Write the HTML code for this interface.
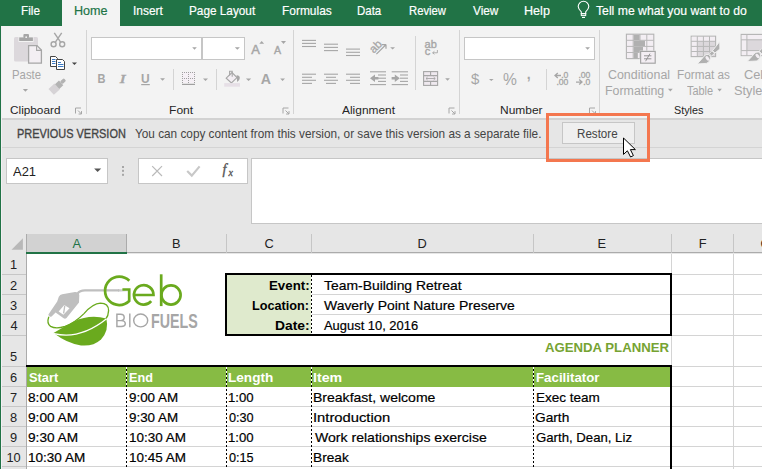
<!DOCTYPE html>
<html><head><meta charset="utf-8"><style>
html,body{margin:0;padding:0;}
body{width:762px;height:469px;overflow:hidden;position:relative;background:#fff;font-family:"Liberation Sans",sans-serif;}
body>div,body>span,body>svg{position:absolute;}
span{white-space:nowrap;line-height:1;}
</style></head><body>
<div style="left:0px;top:0px;width:762px;height:26px;background:#217346;"></div><div style="left:62px;top:0px;width:58px;height:26px;background:#f3f3f3;"></div><div style="left:0px;top:26px;width:762px;height:92px;background:#f3f3f3;"></div><div style="left:0px;top:118px;width:762px;height:2px;background:#d2d2d2;"></div><div style="left:0px;top:120px;width:762px;height:27px;background:#e6e6e6;"></div><div style="left:0px;top:147px;width:762px;height:1px;background:#d4d4d4;"></div><div style="left:0px;top:148px;width:762px;height:86px;background:#e6e6e6;"></div><div style="left:86px;top:30px;width:1px;height:84px;background:#d4d4d4;"></div><div style="left:293px;top:30px;width:1px;height:84px;background:#d4d4d4;"></div><div style="left:459px;top:30px;width:1px;height:84px;background:#d4d4d4;"></div><div style="left:599px;top:30px;width:1px;height:84px;background:#d4d4d4;"></div><div style="left:173px;top:69px;width:1px;height:21px;background:#d4d4d4;"></div><div style="left:216px;top:69px;width:1px;height:21px;background:#d4d4d4;"></div><div style="left:415px;top:36px;width:1px;height:54px;background:#d4d4d4;"></div><div style="left:546px;top:69px;width:1px;height:21px;background:#d4d4d4;"></div><div style="left:91px;top:37px;width:111px;height:23px;background:#ffffff;box-sizing:border-box;border:1px solid #c6c6c6;"></div><div style="left:202px;top:37px;width:43px;height:23px;background:#ffffff;box-sizing:border-box;border:1px solid #c6c6c6;"></div><div style="left:464px;top:37px;width:131px;height:23px;background:#ffffff;box-sizing:border-box;border:1px solid #c6c6c6;"></div><div style="left:562px;top:122px;width:73px;height:22px;background:#efefef;box-sizing:border-box;border:1px solid #c6c6c6;"></div><div style="left:6px;top:158px;width:102px;height:26px;background:#ffffff;box-sizing:border-box;border:1px solid #c6c6c6;"></div><div style="left:138px;top:158px;width:110px;height:26px;background:#ffffff;box-sizing:border-box;border:1px solid #c6c6c6;"></div><div style="left:251px;top:158px;width:520px;height:66px;background:#ffffff;box-sizing:border-box;border:1px solid #c6c6c6;"></div><div style="left:0px;top:234px;width:762px;height:20px;background:#e6e6e6;"></div><div style="left:26px;top:234px;width:101px;height:18px;background:#d2d2d2;"></div><div style="left:26px;top:234px;width:1px;height:19px;background:#ababab;"></div><div style="left:126px;top:234px;width:1px;height:19px;background:#ababab;"></div><div style="left:26px;top:252px;width:101px;height:2px;background:#217346;"></div><div style="left:127px;top:252px;width:635px;height:1px;background:#ababab;"></div><div style="left:226px;top:234px;width:1px;height:19px;background:#c6c6c6;"></div><div style="left:311px;top:234px;width:1px;height:19px;background:#c6c6c6;"></div><div style="left:533px;top:234px;width:1px;height:19px;background:#c6c6c6;"></div><div style="left:671px;top:234px;width:1px;height:19px;background:#c6c6c6;"></div><div style="left:733px;top:234px;width:1px;height:19px;background:#c6c6c6;"></div><div style="left:0px;top:254px;width:26px;height:215px;background:#e6e6e6;"></div><div style="left:26px;top:254px;width:1px;height:215px;background:#ababab;"></div><div style="left:0px;top:274px;width:26px;height:1px;background:#c6c6c6;"></div><div style="left:27px;top:274px;width:735px;height:1px;background:#d4d4d4;"></div><div style="left:0px;top:294px;width:26px;height:1px;background:#c6c6c6;"></div><div style="left:27px;top:294px;width:735px;height:1px;background:#d4d4d4;"></div><div style="left:0px;top:314px;width:26px;height:1px;background:#c6c6c6;"></div><div style="left:27px;top:314px;width:735px;height:1px;background:#d4d4d4;"></div><div style="left:0px;top:335px;width:26px;height:1px;background:#c6c6c6;"></div><div style="left:27px;top:335px;width:735px;height:1px;background:#d4d4d4;"></div><div style="left:0px;top:366px;width:26px;height:1px;background:#c6c6c6;"></div><div style="left:27px;top:366px;width:735px;height:1px;background:#d4d4d4;"></div><div style="left:0px;top:386px;width:26px;height:1px;background:#c6c6c6;"></div><div style="left:27px;top:386px;width:735px;height:1px;background:#d4d4d4;"></div><div style="left:0px;top:406px;width:26px;height:1px;background:#c6c6c6;"></div><div style="left:27px;top:406px;width:735px;height:1px;background:#d4d4d4;"></div><div style="left:0px;top:426px;width:26px;height:1px;background:#c6c6c6;"></div><div style="left:27px;top:426px;width:735px;height:1px;background:#d4d4d4;"></div><div style="left:0px;top:446px;width:26px;height:1px;background:#c6c6c6;"></div><div style="left:27px;top:446px;width:735px;height:1px;background:#d4d4d4;"></div><div style="left:0px;top:466px;width:26px;height:1px;background:#c6c6c6;"></div><div style="left:27px;top:466px;width:735px;height:1px;background:#d4d4d4;"></div><div style="left:126px;top:254px;width:1px;height:215px;background:#d4d4d4;"></div><div style="left:226px;top:254px;width:1px;height:215px;background:#d4d4d4;"></div><div style="left:311px;top:254px;width:1px;height:215px;background:#d4d4d4;"></div><div style="left:533px;top:254px;width:1px;height:215px;background:#d4d4d4;"></div><div style="left:671px;top:254px;width:1px;height:215px;background:#d4d4d4;"></div><div style="left:733px;top:254px;width:1px;height:215px;background:#d4d4d4;"></div><div style="left:27px;top:254px;width:706px;height:112px;background:#ffffff;"></div><div style="left:671px;top:254px;width:1px;height:112px;background:#d4d4d4;"></div><div style="left:733px;top:254px;width:1px;height:112px;background:#d4d4d4;"></div><div style="left:671px;top:274px;width:91px;height:1px;background:#d4d4d4;"></div><div style="left:671px;top:294px;width:91px;height:1px;background:#d4d4d4;"></div><div style="left:671px;top:314px;width:91px;height:1px;background:#d4d4d4;"></div><div style="left:671px;top:335px;width:91px;height:1px;background:#d4d4d4;"></div><div style="left:226px;top:275px;width:86px;height:59px;background:#dfeacd;"></div><div style="left:311px;top:294px;width:359px;height:1px;background:#d4d4d4;"></div><div style="left:311px;top:314px;width:359px;height:1px;background:#d4d4d4;"></div><div style="left:225px;top:273px;width:447px;height:63px;background:transparent;box-sizing:border-box;border:2px solid #000;"></div><div style="left:311px;top:275px;width:1px;height:59px;background:repeating-linear-gradient(to bottom,#000 0 2px,#fff 2px 4px);"></div><div style="left:27px;top:367px;width:643px;height:20px;background:#87bb44;"></div><div style="left:27px;top:387px;width:643px;height:82px;background:#ffffff;"></div><div style="left:27px;top:406px;width:643px;height:1px;background:#d4d4d4;"></div><div style="left:27px;top:426px;width:643px;height:1px;background:#d4d4d4;"></div><div style="left:27px;top:446px;width:643px;height:1px;background:#d4d4d4;"></div><div style="left:27px;top:466px;width:643px;height:1px;background:#d4d4d4;"></div><div style="left:26px;top:365px;width:646px;height:2px;background:#000;"></div><div style="left:670px;top:365px;width:2px;height:104px;background:#000;"></div><div style="left:126px;top:367px;width:1px;height:102px;background:repeating-linear-gradient(to bottom,#fff 0 2px,#000 2px 4px);"></div><div style="left:226px;top:367px;width:1px;height:102px;background:repeating-linear-gradient(to bottom,#fff 0 2px,#000 2px 4px);"></div><div style="left:311px;top:367px;width:1px;height:102px;background:repeating-linear-gradient(to bottom,#fff 0 2px,#000 2px 4px);"></div><div style="left:533px;top:367px;width:1px;height:102px;background:repeating-linear-gradient(to bottom,#fff 0 2px,#000 2px 4px);"></div><div style="left:0px;top:26px;width:1px;height:443px;background:#217346;"></div><div style="left:1px;top:26px;width:1px;height:443px;background:#f3eff3;"></div>
<svg width="762" height="469" viewBox="0 0 762 469" style="left:0;top:0"><rect x="14" y="37" width="24" height="24.5" rx="1.5" fill="#dcd8dc"/><rect x="18.5" y="36" width="15" height="6" fill="#f3f3f3"/><rect x="19.2" y="37.4" width="13.7" height="3.6" fill="#a6a6a6"/><rect x="23.4" y="34" width="5.6" height="4" rx="1" fill="#a6a6a6"/><circle cx="26.2" cy="37.2" r="0.9" fill="#f3f3f3"/><path d="M28.6 45.6 H37 L41.4 50 V63.2 H28.6 Z" fill="#f3eff3" stroke="#a6a6a6" stroke-width="1.3"/><path d="M36.6 45.6 V50.4 H41.4" fill="none" stroke="#a6a6a6" stroke-width="1.1"/><g stroke="#a6a6a6" stroke-width="1.4" fill="none"><path d="M54.3 32.8 L60.6 42.2 M61.7 32.8 L55.4 42.2"/><circle cx="53.6" cy="44.3" r="2.5"/><circle cx="62.2" cy="44.3" r="2.5"/></g><path d="M50.5 56.5 H55.5 L57.5 58.5 V66.5 H50.5 Z" fill="#fff" stroke="#444" stroke-width="1"/><path d="M52 59.5 H55.5 M52 61.5 H55.5 M52 63.5 H55.5" stroke="#3d7bc4" stroke-width="1"/><path d="M56.5 59.5 H62.5 L64.5 61.5 V69.5 H56.5 Z" fill="#fff" stroke="#444" stroke-width="1"/><path d="M58 62.5 H61 M58 64.5 H63.5 M58 66.5 H63.5" stroke="#3d7bc4" stroke-width="1"/><path d="M71.9 62.5 H77 L74.45 65 Z" fill="#444"/><g transform="translate(58.6 85.2) rotate(-42)"><path d="M-10 -4 H-2 V4 H-10 Z" fill="#d6d3d6"/><rect x="-2" y="-3.2" width="5.4" height="6.4" fill="#b3b3b3"/><rect x="3.4" y="-1.8" width="5.2" height="3.6" rx="1.2" fill="#b3b3b3"/></g><path d="M22.8 88.9 H28 L25.4 91.8 Z" fill="#a6a6a6"/><path d="M75.5 113.5 V108.0 H81" fill="none" stroke="#a6a6a6" stroke-width="1"/><path d="M78 110.5 L81.5 114.0 M81.5 111.1 V114.0 H78.6" fill="none" stroke="#a6a6a6" stroke-width="1"/><path d="M283.0 113.5 V108.0 H288.5" fill="none" stroke="#a6a6a6" stroke-width="1"/><path d="M285.5 110.5 L289.0 114.0 M289.0 111.1 V114.0 H286.1" fill="none" stroke="#a6a6a6" stroke-width="1"/><path d="M449.0 113.5 V108.0 H454.5" fill="none" stroke="#a6a6a6" stroke-width="1"/><path d="M451.5 110.5 L455.0 114.0 M455.0 111.1 V114.0 H452.1" fill="none" stroke="#a6a6a6" stroke-width="1"/><path d="M589.5 113.5 V108.0 H595" fill="none" stroke="#a6a6a6" stroke-width="1"/><path d="M592 110.5 L595.5 114.0 M595.5 111.1 V114.0 H592.6" fill="none" stroke="#a6a6a6" stroke-width="1"/><path d="M192.2 47.3 H196.8 L194.5 49.8 Z" fill="#a6a6a6"/><path d="M234.8 47.3 H239.9 L237.35000000000002 49.8 Z" fill="#a6a6a6"/><path d="M585.2 47.3 H590 L587.6 49.8 Z" fill="#a6a6a6"/><text x="97.6" y="82.9" font-family="Liberation Sans" font-weight="700" font-size="12.3" fill="#a6a6a6" transform="translate(97.6 0) scale(0.9 1) translate(-97.6 0)">B</text><text x="119.8" y="82.9" font-family="Liberation Serif" font-style="italic" font-size="13.5" fill="#a6a6a6" stroke="#a6a6a6" stroke-width="0.6" transform="translate(119.8 0) scale(1.25 1) translate(-119.8 0)">I</text><text x="141" y="82.7" font-family="Liberation Sans" font-weight="700" font-size="12" fill="#a6a6a6">U</text><rect x="141.2" y="84" width="8.6" height="1.2" fill="#a6a6a6"/><path d="M160.1 78.2 H165 L162.55 80.8 Z" fill="#a6a6a6"/><path d="M203 78.6 H208 L205.5 81 Z" fill="#a6a6a6"/><path d="M245.9 78.6 H251.2 L248.55 81 Z" fill="#a6a6a6"/><path d="M280.2 78.6 H285 L282.6 81 Z" fill="#a6a6a6"/><rect x="182" y="72" width="13" height="11" fill="#f5f0f5"/><g fill="#a0a0a0"><rect x="182" y="72" width="1" height="1"/><rect x="182" y="74" width="1" height="1"/><rect x="182" y="76" width="1" height="1"/><rect x="182" y="78" width="1" height="1"/><rect x="182" y="80" width="1" height="1"/><rect x="182" y="82" width="1" height="1"/><rect x="184" y="72" width="1" height="1"/><rect x="184" y="78" width="1" height="1"/><rect x="186" y="72" width="1" height="1"/><rect x="186" y="78" width="1" height="1"/><rect x="188" y="72" width="1" height="1"/><rect x="188" y="74" width="1" height="1"/><rect x="188" y="76" width="1" height="1"/><rect x="188" y="78" width="1" height="1"/><rect x="188" y="80" width="1" height="1"/><rect x="188" y="82" width="1" height="1"/><rect x="190" y="72" width="1" height="1"/><rect x="190" y="78" width="1" height="1"/><rect x="192" y="72" width="1" height="1"/><rect x="192" y="78" width="1" height="1"/><rect x="194" y="72" width="1" height="1"/><rect x="194" y="74" width="1" height="1"/><rect x="194" y="76" width="1" height="1"/><rect x="194" y="78" width="1" height="1"/><rect x="194" y="80" width="1" height="1"/><rect x="194" y="82" width="1" height="1"/></g><rect x="182" y="83.8" width="13" height="1.2" fill="#a0a0a0"/><path d="M226.2 78.2 L232 72.6 L237 77.6 L231.4 83 Z" fill="#f3eef3" stroke="#a6a6a6" stroke-width="1.1"/><path d="M229.6 75.4 V71.2 H232.2 V76.8" fill="none" stroke="#a6a6a6" stroke-width="1.1"/><path d="M236.6 75.2 Q239.6 75 239.8 78 Q239.8 80.4 237.2 82 Q236.8 78.6 236.6 75.2 Z" fill="#a6a6a6"/><rect x="224.2" y="83.1" width="15.8" height="3.6" fill="#e6dfe6"/><text x="260.8" y="83.8" font-family="Liberation Sans" font-weight="700" font-size="14.2" fill="#a6a6a6">A</text><text x="251.2" y="53.5" font-family="Liberation Sans" font-size="13" fill="#a6a6a6" stroke="#a6a6a6" stroke-width="0.45">A</text><path d="M259.3 43.8 H264.1 L261.7 40.9 Z" fill="#a6a6a6"/><text x="274" y="53.5" font-family="Liberation Sans" font-size="10.6" fill="#a6a6a6" stroke="#a6a6a6" stroke-width="0.4">A</text><path d="M281 40.9 H286 L283.5 44 Z" fill="#a6a6a6"/><rect x="302" y="39.85" width="14" height="1.1" fill="#a6a6a6"/><rect x="302" y="42.85" width="14" height="1.1" fill="#a6a6a6"/><rect x="302" y="45.95" width="14" height="1.1" fill="#a6a6a6"/><rect x="324" y="43.650000000000006" width="14" height="1.1" fill="#a6a6a6"/><rect x="324" y="46.85" width="14" height="1.1" fill="#a6a6a6"/><rect x="324" y="50.050000000000004" width="14" height="1.1" fill="#a6a6a6"/><rect x="346" y="48.550000000000004" width="14" height="1.1" fill="#a6a6a6"/><rect x="346" y="51.75" width="14" height="1.1" fill="#a6a6a6"/><rect x="346" y="54.95" width="14" height="1.1" fill="#a6a6a6"/><rect x="302" y="73.65" width="14" height="1.1" fill="#a6a6a6"/><rect x="324" y="73.65" width="14" height="1.1" fill="#a6a6a6"/><rect x="346" y="73.65" width="14" height="1.1" fill="#a6a6a6"/><rect x="302" y="76.75" width="10" height="1.1" fill="#a6a6a6"/><rect x="326" y="76.75" width="10" height="1.1" fill="#a6a6a6"/><rect x="350" y="76.75" width="10" height="1.1" fill="#a6a6a6"/><rect x="302" y="79.75" width="14" height="1.1" fill="#a6a6a6"/><rect x="324" y="79.75" width="14" height="1.1" fill="#a6a6a6"/><rect x="346" y="79.75" width="14" height="1.1" fill="#a6a6a6"/><rect x="302" y="82.85000000000001" width="10" height="1.1" fill="#a6a6a6"/><rect x="326" y="82.85000000000001" width="10" height="1.1" fill="#a6a6a6"/><rect x="350" y="82.85000000000001" width="10" height="1.1" fill="#a6a6a6"/><rect x="370" y="71.25" width="16" height="1.1" fill="#a6a6a6"/><rect x="391.7" y="71.25" width="16.30000000000001" height="1.1" fill="#a6a6a6"/><rect x="370" y="84.05" width="16" height="1.1" fill="#a6a6a6"/><rect x="391.7" y="84.05" width="16.30000000000001" height="1.1" fill="#a6a6a6"/><rect x="378" y="74.45" width="8" height="1.1" fill="#a6a6a6"/><rect x="400" y="74.45" width="8" height="1.1" fill="#a6a6a6"/><rect x="378" y="77.65" width="8" height="1.1" fill="#a6a6a6"/><rect x="400" y="77.65" width="8" height="1.1" fill="#a6a6a6"/><rect x="378" y="80.85000000000001" width="8" height="1.1" fill="#a6a6a6"/><rect x="400" y="80.85000000000001" width="8" height="1.1" fill="#a6a6a6"/><path d="M370 78.2 L375 74.4 V76.9 H378.4 V79.5 H375 V82 Z" fill="#a6a6a6"/><path d="M399.8 78.2 L394.8 74.4 V76.9 H391.6 V79.5 H394.8 V82 Z" fill="#a6a6a6"/><g transform="translate(375.6 46.6) rotate(-45)"><text x="0" y="3.6" text-anchor="middle" font-family="Liberation Sans" font-size="11.5" fill="#a6a6a6" stroke="#a6a6a6" stroke-width="0.3">ab</text></g><path d="M376.4 54.2 L385.6 45 M386 44.6 H381.8 M386 44.6 V48.8" fill="none" stroke="#a6a6a6" stroke-width="1.2"/><path d="M390.2 47.2 H395 L392.6 49.6 Z" fill="#a6a6a6"/><text x="424.6" y="47.6" font-family="Liberation Sans" font-size="11" fill="#a6a6a6" stroke="#a6a6a6" stroke-width="0.35">ab</text><text x="424.8" y="54.6" font-family="Liberation Sans" font-size="11" fill="#a6a6a6" stroke="#a6a6a6" stroke-width="0.35">c</text><path d="M437.4 50 V52.8 H432.8 M434.4 51.3 L432.6 52.8 L434.4 54.3" fill="none" stroke="#a6a6a6" stroke-width="0.9"/><rect x="423.6" y="71.6" width="14" height="13.8" fill="#efe9ef" stroke="#a6a6a6" stroke-width="1.1"/><path d="M423.6 75.6 H437.6 M423.6 81.4 H437.6 M430.6 71.6 V75.6 M430.6 81.4 V85.4" stroke="#a6a6a6" stroke-width="1.1"/><path d="M426 78.5 H435.2 M427.6 77 L426 78.5 L427.6 80 M433.6 77 L435.2 78.5 L433.6 80" fill="none" stroke="#a6a6a6" stroke-width="0.9"/><path d="M445.2 78.2 H449.9 L447.54999999999995 80.7 Z" fill="#a6a6a6"/><text x="471" y="84.4" font-family="Liberation Sans" font-size="15" fill="#a6a6a6">$</text><path d="M489 79 H493.6 L491.3 81 Z" fill="#a6a6a6"/><text x="503" y="85.3" font-family="Liberation Sans" font-size="15.6" fill="#a6a6a6">%</text><text x="526.8" y="78.6" font-family="Liberation Sans" font-weight="700" font-size="14" fill="#a6a6a6">,</text><text x="568.4" y="78" font-family="Liberation Sans" font-size="8.6" fill="#a6a6a6" stroke="#a6a6a6" stroke-width="0.3" text-anchor="end">.0</text><text x="568.4" y="84.9" font-family="Liberation Sans" font-size="8.6" fill="#a6a6a6" stroke="#a6a6a6" stroke-width="0.3" text-anchor="end">.00</text><text x="590.4" y="78" font-family="Liberation Sans" font-size="8.6" fill="#a6a6a6" stroke="#a6a6a6" stroke-width="0.3" text-anchor="end">.00</text><text x="590.4" y="84.9" font-family="Liberation Sans" font-size="8.6" fill="#a6a6a6" stroke="#a6a6a6" stroke-width="0.3" text-anchor="end">.0</text><path d="M555.2 75.5 H561 M557.8 73 L555 75.5 L557.8 78" fill="none" stroke="#a6a6a6" stroke-width="1.3"/><path d="M576 82.1 H581.8 M579.2 79.6 L582 82.1 L579.2 84.6" fill="none" stroke="#a6a6a6" stroke-width="1.3"/><rect x="626.4" y="34.2" width="27.4" height="24.4" fill="#f3eef3" stroke="#b4b4b4" stroke-width="1.1"/><path d="M633.2 34.2 V58.6 M640 34.2 V58.6 M646.8 34.2 V58.6 M626.4 40.3 H653.8 M626.4 46.4 H653.8 M626.4 52.5 H653.8" stroke="#b8b8b8" stroke-width="1"/><g fill="#b0b0b0"><rect x="633.8" y="34.8" width="5.8" height="5.2"/><rect x="633.8" y="40.8" width="11.2" height="5.2"/><rect x="633.8" y="46.9" width="9.2" height="5.2"/><rect x="633.8" y="53" width="4" height="5.4"/></g><rect x="640.6" y="51.4" width="14.6" height="11.8" fill="#f3eef3" stroke="#f3f3f3" stroke-width="1.6"/><rect x="640.6" y="51.4" width="14.6" height="11.8" fill="#f3eef3" stroke="#a6a6a6" stroke-width="1.2"/><path d="M644 55.8 H651.4 M644 58.8 H651.4 M650 53.6 L645.6 61.2" stroke="#8c8c8c" stroke-width="0.9" fill="none"/><rect x="691.2" y="36.2" width="24.4" height="20.4" fill="#dcd8dc" stroke="#b4b4b4" stroke-width="1.1"/><rect x="691.8" y="36.8" width="23.2" height="4.4" fill="#f3eef3"/><rect x="691.8" y="36.8" width="5.4" height="19.2" fill="#f3eef3"/><path d="M697.3 36.2 V56.6 M703.4 36.2 V56.6 M709.5 36.2 V56.6 M691.2 41.3 H715.6 M691.2 46.4 H715.6 M691.2 51.5 H715.6" stroke="#b8b8b8" stroke-width="1"/><rect x="741.2" y="34.4" width="30" height="21.2" fill="#dcd8dc" stroke="#b4b4b4" stroke-width="1.1"/><rect x="741.8" y="35" width="30" height="4.6" fill="#f3eef3"/><rect x="741.8" y="35" width="5" height="20" fill="#f3eef3"/><rect x="741.8" y="50.8" width="30" height="4.4" fill="#f3eef3"/><path d="M746.9 34.4 V55.6 M741.2 39.8 H772 M741.2 50.6 H772" stroke="#b8b8b8" stroke-width="1"/><g transform="translate(0 0)" fill="#b0b0b0" stroke="#f3f3f3" stroke-width="0.9" stroke-linejoin="round"><path d="M719.7 41.6 L719.9 49 L714.9 53 L712.6 50.6 Z"/><path d="M711.9 50.8 L714.7 53.2 L711.6 56 L709.1 53.7 Z"/><path d="M708.4 54.4 Q711.4 55.8 710.4 58.6 Q709.8 62.4 706.4 63.4 L697.2 63.9 Q701.6 59.4 704 56.2 Q705.8 54 708.4 54.4 Z"/></g><ellipse cx="707.5" cy="58.4" rx="1.5" ry="2.6" transform="rotate(-42 707.5 58.4)" fill="#f3eef3"/><g transform="translate(50 -2.4)" fill="#b0b0b0" stroke="#f3f3f3" stroke-width="0.9" stroke-linejoin="round"><path d="M719.7 41.6 L719.9 49 L714.9 53 L712.6 50.6 Z"/><path d="M711.9 50.8 L714.7 53.2 L711.6 56 L709.1 53.7 Z"/><path d="M708.4 54.4 Q711.4 55.8 710.4 58.6 Q709.8 62.4 706.4 63.4 L697.2 63.9 Q701.6 59.4 704 56.2 Q705.8 54 708.4 54.4 Z"/></g><ellipse cx="757.5" cy="56.0" rx="1.5" ry="2.6" transform="rotate(-42 757.5 56.0)" fill="#f3eef3"/><path d="M668 88.8 H672.7 L670.35 91.4 Z" fill="#a6a6a6"/><path d="M717.4 88.8 H721.8 L719.5999999999999 91.4 Z" fill="#a6a6a6"/><path d="M581.3 13.7 V11.8 Q578.2 9 578.2 6.6 A5.3 5.3 0 0 1 588.8 6.6 Q588.8 9 585.7 11.8 V13.7 Z" fill="none" stroke="#fff" stroke-width="1.1"/><rect x="581.3" y="13.6" width="4.4" height="2" fill="none" stroke="#fff" stroke-width="1"/><rect x="582" y="16.9" width="3" height="1.1" fill="#fff"/><path d="M94.1 168.4 H101.2 L97.65 172 Z" fill="#555"/><g fill="#a6a6a6"><rect x="122" y="166" width="2" height="2"/><rect x="122" y="169.8" width="2" height="2"/><rect x="122" y="173.8" width="2" height="2"/></g><path d="M152.2 166.2 L162 176 M162 166.2 L152.2 176" stroke="#bababa" stroke-width="1.2"/><path d="M187.2 171 L191.8 175.6 L199.6 166.4" fill="none" stroke="#c8c8c8" stroke-width="2.2"/><text x="222.6" y="174.4" font-family="Liberation Serif" font-style="italic" font-size="14" fill="#555" stroke="#555" stroke-width="0.35">f</text><text x="228.4" y="175.6" font-family="Liberation Serif" font-style="italic" font-size="10" fill="#555" stroke="#555" stroke-width="0.3">x</text><path d="M22.9 238.2 V249.8 H11.5 Z" fill="#b8b8b8"/><defs><linearGradient id="hg" x1="0" x2="1"><stop offset="0" stop-color="#bfbfbf"/><stop offset="1" stop-color="#bfbfbf" stop-opacity="0"/></linearGradient></defs><path d="M77.6 293.6 Q79.6 290.4 85 290.4 H119" fill="none" stroke="#bfbfbf" stroke-width="2.3"/><rect x="118" y="289.25" width="13" height="2.3" fill="url(#hg)"/><path d="M58.8 296.8 Q60 294.6 62.2 294.2 L75 292.1 Q78.6 292 79.3 295 L79 302.5 L66.5 318 Q65 319.2 63.6 318.2 L55.6 312.6 L51.6 316.4 Q49 317.8 48.4 314.6 L57.2 301.4 Z" fill="#bfbfbf"/><path d="M58.6 311.4 L64.3 304.9 L69.5 308.3 L63.4 314.8 Z" fill="#fff"/><path d="M64.8 305.6 L63.6 313.4" stroke="#bfbfbf" stroke-width="1.3"/><path d="M48.8 316.8 Q46.4 323.6 50.6 326.4 Q56 329.4 65 326.4 Q75 322.6 84 313.6 Q93 303.4 100.4 303.2 Q108.6 303.4 108.6 310.6 Q108.4 315.6 105.8 319" fill="none" stroke="#6aaa1e" stroke-width="1.3"/><path d="M53.6 333 Q64 326.4 74 321.4 Q90 314 106.4 318.6 Q109.2 331 101 339.4 Q93 346.6 81 345.4 Q67 343.4 53.6 333 Z" fill="#6aaa1e"/><path d="M54 333.6 Q80 340 106.6 318.8" fill="none" stroke="#fff" stroke-width="1.3"/><g fill="none" stroke="#6aaa1e" stroke-width="2.7"><path d="M129.3 280.8 A14.2 14.2 0 1 0 129.2 301 V289.5 H122.4"/><path d="M134.4 295 H153.5 A9.75 9.75 0 1 0 151.2 301.2"/><path d="M161.2 274.3 V306.1"/><circle cx="171" cy="295" r="9.6"/></g><g fill="none" stroke="#a6a6a6" stroke-width="1.45"><path d="M116.9 313.6 V327.2 M116.2 314.3 H120.6 Q124.2 314.3 124.2 317.5 Q124.2 320.6 120.6 320.6 H116.9 M116.9 320.6 H121.2 Q125.3 320.6 125.3 323.8 Q125.3 326.5 121.2 326.5 H116.2"/><path d="M129.8 313.6 V327.3"/><ellipse cx="140.7" cy="320.45" rx="7" ry="6.4"/></g></svg>
<span style="left:20.64px;top:4.18px;font-size:13.6px;font-weight:400;color:#fff;transform:scaleX(0.8650);transform-origin:0 0;-webkit-text-stroke:0.2px #fff;">File</span>
<span style="left:133.02px;top:4.18px;font-size:13.6px;font-weight:400;color:#fff;transform:scaleX(0.8758);transform-origin:0 0;-webkit-text-stroke:0.2px #fff;">Insert</span>
<span style="left:189.13px;top:4.18px;font-size:13.6px;font-weight:400;color:#fff;transform:scaleX(0.8667);transform-origin:0 0;-webkit-text-stroke:0.2px #fff;">Page Layout</span>
<span style="left:281.62px;top:4.18px;font-size:13.6px;font-weight:400;color:#fff;transform:scaleX(0.8782);transform-origin:0 0;-webkit-text-stroke:0.2px #fff;">Formulas</span>
<span style="left:357.16px;top:4.18px;font-size:13.6px;font-weight:400;color:#fff;transform:scaleX(0.8429);transform-origin:0 0;-webkit-text-stroke:0.2px #fff;">Data</span>
<span style="left:408.67px;top:4.18px;font-size:13.6px;font-weight:400;color:#fff;transform:scaleX(0.8295);transform-origin:0 0;-webkit-text-stroke:0.2px #fff;">Review</span>
<span style="left:472.70px;top:4.18px;font-size:13.6px;font-weight:400;color:#fff;transform:scaleX(0.8690);transform-origin:0 0;-webkit-text-stroke:0.2px #fff;">View</span>
<span style="left:524.07px;top:4.18px;font-size:13.6px;font-weight:400;color:#fff;transform:scaleX(0.9259);transform-origin:0 0;-webkit-text-stroke:0.2px #fff;">Help</span>
<span style="left:595.70px;top:4.18px;font-size:13.6px;font-weight:400;color:#fff;transform:scaleX(0.8988);transform-origin:0 0;-webkit-text-stroke:0.2px #fff;">Tell me what you want to do</span>
<span style="left:73.67px;top:4.18px;font-size:13.6px;font-weight:400;color:#217346;transform:scaleX(0.9257);transform-origin:0 0;-webkit-text-stroke:0.2px #217346;">Home</span>
<span style="left:10.30px;top:105.06px;font-size:10.8px;font-weight:400;color:#262626;transform:scaleX(1.0913);transform-origin:0 0;">Clipboard</span>
<span style="left:169.38px;top:105.06px;font-size:10.8px;font-weight:400;color:#262626;transform:scaleX(1.1190);transform-origin:0 0;">Font</span>
<span style="left:342.00px;top:105.06px;font-size:10.8px;font-weight:400;color:#262626;transform:scaleX(1.1042);transform-origin:0 0;">Alignment</span>
<span style="left:499.89px;top:105.06px;font-size:10.8px;font-weight:400;color:#262626;transform:scaleX(1.1081);transform-origin:0 0;">Number</span>
<span style="left:674.00px;top:105.06px;font-size:10.8px;font-weight:400;color:#262626;transform:scaleX(1.0000);transform-origin:0 0;">Styles</span>
<span style="left:11.81px;top:68.56px;font-size:12.8px;font-weight:400;color:#a6a6a6;transform:scaleX(0.8871);transform-origin:0 0;">Paste</span>
<span style="left:607.97px;top:69.34px;font-size:12px;font-weight:400;color:#a6a6a6;transform:scaleX(1.0339);transform-origin:0 0;">Conditional</span>
<span style="left:605.37px;top:85.34px;font-size:12px;font-weight:400;color:#a6a6a6;transform:scaleX(1.0321);transform-origin:0 0;">Formatting</span>
<span style="left:677.02px;top:69.34px;font-size:12px;font-weight:400;color:#a6a6a6;transform:scaleX(0.9811);transform-origin:0 0;">Format as</span>
<span style="left:687.20px;top:85.34px;font-size:12px;font-weight:400;color:#a6a6a6;transform:scaleX(0.9107);transform-origin:0 0;">Table</span>
<span style="left:744.00px;top:68.66px;font-size:12.8px;font-weight:400;color:#a6a6a6;">Cell</span>
<span style="left:734.00px;top:84.66px;font-size:12.8px;font-weight:400;color:#a6a6a6;">Styles</span>
<span style="left:16.66px;top:127.49px;font-size:13px;font-weight:400;color:#444444;transform:scaleX(0.8414);transform-origin:0 0;-webkit-text-stroke:0.35px #444;">PREVIOUS VERSION</span>
<span style="left:135.49px;top:127.49px;font-size:13px;font-weight:400;color:#444444;transform:scaleX(0.9067);transform-origin:0 0;">You can copy content from this version, or save this version as a separate file.</span>
<span style="left:577.07px;top:128.42px;font-size:12.5px;font-weight:400;color:#444444;transform:scaleX(0.9286);transform-origin:0 0;">Restore</span>
<span style="left:13.20px;top:166.12px;font-size:12.5px;font-weight:400;color:#222222;transform:scaleX(1.0364);transform-origin:0 0;">A21</span>
<span style="left:72.60px;top:238.26px;font-size:12.8px;font-weight:400;color:#217346;">A</span>
<span style="left:172.00px;top:238.26px;font-size:12.8px;font-weight:400;color:#222222;">B</span>
<span style="left:264.50px;top:238.26px;font-size:12.8px;font-weight:400;color:#222222;">C</span>
<span style="left:417.50px;top:238.26px;font-size:12.8px;font-weight:400;color:#222222;">D</span>
<span style="left:597.50px;top:238.26px;font-size:12.8px;font-weight:400;color:#222222;">E</span>
<span style="left:698.70px;top:238.26px;font-size:12.8px;font-weight:400;color:#222222;">F</span>
<span style="left:760.50px;top:238.26px;font-size:12.8px;font-weight:400;color:#222222;">G</span>
<span style="left:9.90px;top:259.26px;font-size:12.8px;font-weight:400;color:#222222;">1</span>
<span style="left:9.90px;top:280.26px;font-size:12.8px;font-weight:400;color:#222222;">2</span>
<span style="left:9.90px;top:300.26px;font-size:12.8px;font-weight:400;color:#222222;">3</span>
<span style="left:10.40px;top:320.26px;font-size:12.8px;font-weight:400;color:#222222;">4</span>
<span style="left:9.90px;top:351.26px;font-size:12.8px;font-weight:400;color:#222222;">5</span>
<span style="left:9.90px;top:372.26px;font-size:12.8px;font-weight:400;color:#222222;">6</span>
<span style="left:9.90px;top:392.46px;font-size:12.8px;font-weight:400;color:#222222;">7</span>
<span style="left:9.90px;top:412.46px;font-size:12.8px;font-weight:400;color:#222222;">8</span>
<span style="left:9.90px;top:432.46px;font-size:12.8px;font-weight:400;color:#222222;">9</span>
<span style="left:6.40px;top:452.46px;font-size:12.8px;font-weight:400;color:#222222;">10</span>
<span style="left:269.42px;top:278.87px;font-size:13.5px;font-weight:700;color:#000000;transform:scaleX(0.9846);transform-origin:0 0;">Event:</span>
<span style="left:252.46px;top:298.97px;font-size:13.5px;font-weight:700;color:#000000;transform:scaleX(0.9390);transform-origin:0 0;">Location:</span>
<span style="left:274.98px;top:318.87px;font-size:13.5px;font-weight:700;color:#000000;transform:scaleX(1.0250);transform-origin:0 0;">Date:</span>
<span style="left:323.60px;top:278.97px;font-size:13.5px;font-weight:400;color:#000000;transform:scaleX(1.0299);transform-origin:0 0;-webkit-text-stroke:0.2px #000;">Team-Building Retreat</span>
<span style="left:323.60px;top:299.07px;font-size:13.5px;font-weight:400;color:#000000;transform:scaleX(1.0321);transform-origin:0 0;-webkit-text-stroke:0.2px #000;">Waverly Point Nature Preserve</span>
<span style="left:323.60px;top:318.77px;font-size:13.5px;font-weight:400;color:#000000;transform:scaleX(0.9571);transform-origin:0 0;-webkit-text-stroke:0.2px #000;">August 10, 2016</span>
<span style="left:544.60px;top:340.67px;font-size:13.5px;font-weight:700;color:#76a332;transform:scaleX(0.9764);transform-origin:0 0;">AGENDA PLANNER</span>
<span style="left:29.45px;top:370.97px;font-size:13.5px;font-weight:700;color:#ffffff;transform:scaleX(0.9533);transform-origin:0 0;">Start</span>
<span style="left:128.76px;top:370.97px;font-size:13.5px;font-weight:700;color:#ffffff;transform:scaleX(0.9375);transform-origin:0 0;">End</span>
<span style="left:228.19px;top:370.97px;font-size:13.5px;font-weight:700;color:#ffffff;transform:scaleX(1.0070);transform-origin:0 0;">Length</span>
<span style="left:313.45px;top:370.97px;font-size:13.5px;font-weight:700;color:#ffffff;transform:scaleX(1.0500);transform-origin:0 0;">Item</span>
<span style="left:536.02px;top:370.97px;font-size:13.5px;font-weight:700;color:#ffffff;transform:scaleX(0.9844);transform-origin:0 0;">Facilitator</span>
<span style="left:28.19px;top:391.17px;font-size:13.5px;font-weight:400;color:#000000;transform:scaleX(1.0104);transform-origin:0 0;-webkit-text-stroke:0.2px #000;">8:00 AM</span>
<span style="left:128.71px;top:391.17px;font-size:13.5px;font-weight:400;color:#000000;transform:scaleX(0.9917);transform-origin:0 0;-webkit-text-stroke:0.2px #000;">9:00 AM</span>
<span style="left:228.22px;top:391.17px;font-size:13.5px;font-weight:400;color:#000000;transform:scaleX(0.9760);transform-origin:0 0;-webkit-text-stroke:0.2px #000;">1:00</span>
<span style="left:313.46px;top:391.17px;font-size:13.5px;font-weight:400;color:#000000;transform:scaleX(1.0388);transform-origin:0 0;-webkit-text-stroke:0.2px #000;">Breakfast, welcome</span>
<span style="left:535.50px;top:391.17px;font-size:13.5px;font-weight:400;color:#000000;transform:scaleX(1.0016);transform-origin:0 0;-webkit-text-stroke:0.2px #000;">Exec team</span>
<span style="left:28.19px;top:411.47px;font-size:13.5px;font-weight:400;color:#000000;transform:scaleX(1.0104);transform-origin:0 0;-webkit-text-stroke:0.2px #000;">9:00 AM</span>
<span style="left:128.71px;top:411.47px;font-size:13.5px;font-weight:400;color:#000000;transform:scaleX(0.9917);transform-origin:0 0;-webkit-text-stroke:0.2px #000;">9:30 AM</span>
<span style="left:229.20px;top:411.47px;font-size:13.5px;font-weight:400;color:#000000;transform:scaleX(0.9385);transform-origin:0 0;-webkit-text-stroke:0.2px #000;">0:30</span>
<span style="left:313.41px;top:411.47px;font-size:13.5px;font-weight:400;color:#000000;transform:scaleX(1.0942);transform-origin:0 0;-webkit-text-stroke:0.2px #000;">Introduction</span>
<span style="left:535.48px;top:411.47px;font-size:13.5px;font-weight:400;color:#000000;transform:scaleX(1.0156);transform-origin:0 0;-webkit-text-stroke:0.2px #000;">Garth</span>
<span style="left:28.19px;top:431.07px;font-size:13.5px;font-weight:400;color:#000000;transform:scaleX(1.0104);transform-origin:0 0;-webkit-text-stroke:0.2px #000;">9:30 AM</span>
<span style="left:128.70px;top:431.07px;font-size:13.5px;font-weight:400;color:#000000;transform:scaleX(0.9964);transform-origin:0 0;-webkit-text-stroke:0.2px #000;">10:30 AM</span>
<span style="left:228.22px;top:431.07px;font-size:13.5px;font-weight:400;color:#000000;transform:scaleX(0.9760);transform-origin:0 0;-webkit-text-stroke:0.2px #000;">1:00</span>
<span style="left:314.50px;top:431.07px;font-size:13.5px;font-weight:400;color:#000000;transform:scaleX(1.0421);transform-origin:0 0;-webkit-text-stroke:0.2px #000;">Work relationships exercise</span>
<span style="left:535.52px;top:431.07px;font-size:13.5px;font-weight:400;color:#000000;transform:scaleX(0.9763);transform-origin:0 0;-webkit-text-stroke:0.2px #000;">Garth, Dean, Liz</span>
<span style="left:28.20px;top:451.27px;font-size:13.5px;font-weight:400;color:#000000;transform:scaleX(1.0036);transform-origin:0 0;-webkit-text-stroke:0.2px #000;">10:30 AM</span>
<span style="left:128.70px;top:451.27px;font-size:13.5px;font-weight:400;color:#000000;transform:scaleX(0.9964);transform-origin:0 0;-webkit-text-stroke:0.2px #000;">10:45 AM</span>
<span style="left:229.20px;top:451.27px;font-size:13.5px;font-weight:400;color:#000000;transform:scaleX(0.9385);transform-origin:0 0;-webkit-text-stroke:0.2px #000;">0:15</span>
<span style="left:313.49px;top:451.27px;font-size:13.5px;font-weight:400;color:#000000;transform:scaleX(1.0147);transform-origin:0 0;-webkit-text-stroke:0.2px #000;">Break</span>
<span style="left:151.28px;top:311.85px;font-size:19.9px;font-weight:700;color:#a6a6a6;transform:scaleX(0.7156);transform-origin:0 0;">FUELS</span>
<div style="left:546px;top:113px;width:104px;height:49px;box-sizing:border-box;border:3px solid #f4774f;"></div><svg width="762" height="469" style="left:0;top:0"><path d="M623.5 138 V154.4 L627.4 150.8 L630.6 157 L633.4 155.6 L630.4 149.6 L635.4 149.6 Z" fill="#fff" stroke="#000" stroke-width="1" stroke-linejoin="miter"/></svg>
</body></html>
